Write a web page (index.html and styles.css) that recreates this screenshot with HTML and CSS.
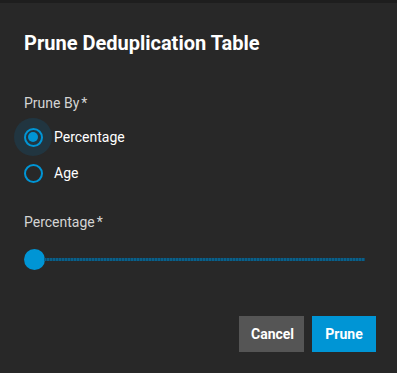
FILE: index.html
```html
<!DOCTYPE html>
<html>
<head>
<meta charset="utf-8">
<link rel="stylesheet" href="styles.css">
</head>
<body>
<div class="dialog">
  <h1 class="title">Prune Deduplication Table</h1>
  <div class="field">
    <div class="label">Prune By<span class="req">*</span></div>
    <div class="radios">
      <label class="radio checked"><span class="halo"><span class="ring"><span class="dot"></span></span></span><span class="rtext">Percentage</span></label>
      <label class="radio"><span class="halo plain"><span class="ring"></span></span><span class="rtext">Age</span></label>
    </div>
  </div>
  <div class="field slider-field">
    <div class="label">Percentage<span class="req">*</span></div>
    <div class="slider">
      <span class="thumb"></span>
      <span class="track"></span>
    </div>
  </div>
  <div class="actions">
    <button class="btn cancel">Cancel</button>
    <button class="btn prune">Prune</button>
  </div>
</div>
</body>
</html>
```
FILE: styles.css
```css
html, body {
  margin: 0;
  padding: 0;
  background: #1e1e1e;
  font-family: "Roboto", "Liberation Sans", sans-serif;
}
.dialog {
  margin-top: 3px;
  background: #282828;
  height: 370px;
  box-sizing: border-box;
  padding: 28px 21px 0 24px;
  display: flex;
  flex-direction: column;
}
.title {
  margin: 0;
  font-size: 20px;
  line-height: 24px;
  font-weight: 700;
  color: #ffffff;
}
.field {
  margin-top: 39px;
}
.label {
  font-size: 14px;
  line-height: 18px;
  color: #d4d4d4;
}
.req {
  margin-left: 2px;
}
.radios {
  margin-top: 7px;
  margin-left: -10px;
  display: flex;
  flex-direction: column;
}
.radio {
  display: flex;
  align-items: center;
  height: 36px;
  font-size: 14px;
  color: #ffffff;
}
.halo {
  width: 38px;
  height: 38px;
  border-radius: 50%;
  display: flex;
  align-items: center;
  justify-content: center;
  background: #213540;
  margin-right: 2px;
}
.halo.plain {
  background: transparent;
}
.ring {
  width: 19px;
  height: 19px;
  box-sizing: border-box;
  border: 2px solid #0095d5;
  border-radius: 50%;
  display: flex;
  align-items: center;
  justify-content: center;
}
.dot {
  width: 10px;
  height: 10px;
  border-radius: 50%;
  background: #0095d5;
}
.slider-field {
  margin-top: 22px;
}
.slider {
  margin-top: 17px;
  display: flex;
  align-items: center;
  height: 22px;
}
.thumb {
  width: 21px;
  height: 21px;
  border-radius: 50%;
  background: #0095d5;
  flex: none;
}
.track {
  flex: 1;
  height: 3px;
  background-image: repeating-linear-gradient(90deg, #0b5f88 0 2px, #0a4a6a 2px 3px);
  margin-left: -1px;
  margin-right: 11px;
}
.actions {
  margin-top: auto;
  margin-bottom: 21px;
  display: flex;
  justify-content: flex-end;
  gap: 8px;
}
.btn {
  border: none;
  height: 36px;
  padding: 0 12px;
  font-family: inherit;
  font-size: 14px;
  font-weight: 700;
  color: #ffffff;
}
.cancel {
  background: #555555;
  width: 65px;
}
.prune {
  background: #0095d5;
  width: 64px;
}
```
